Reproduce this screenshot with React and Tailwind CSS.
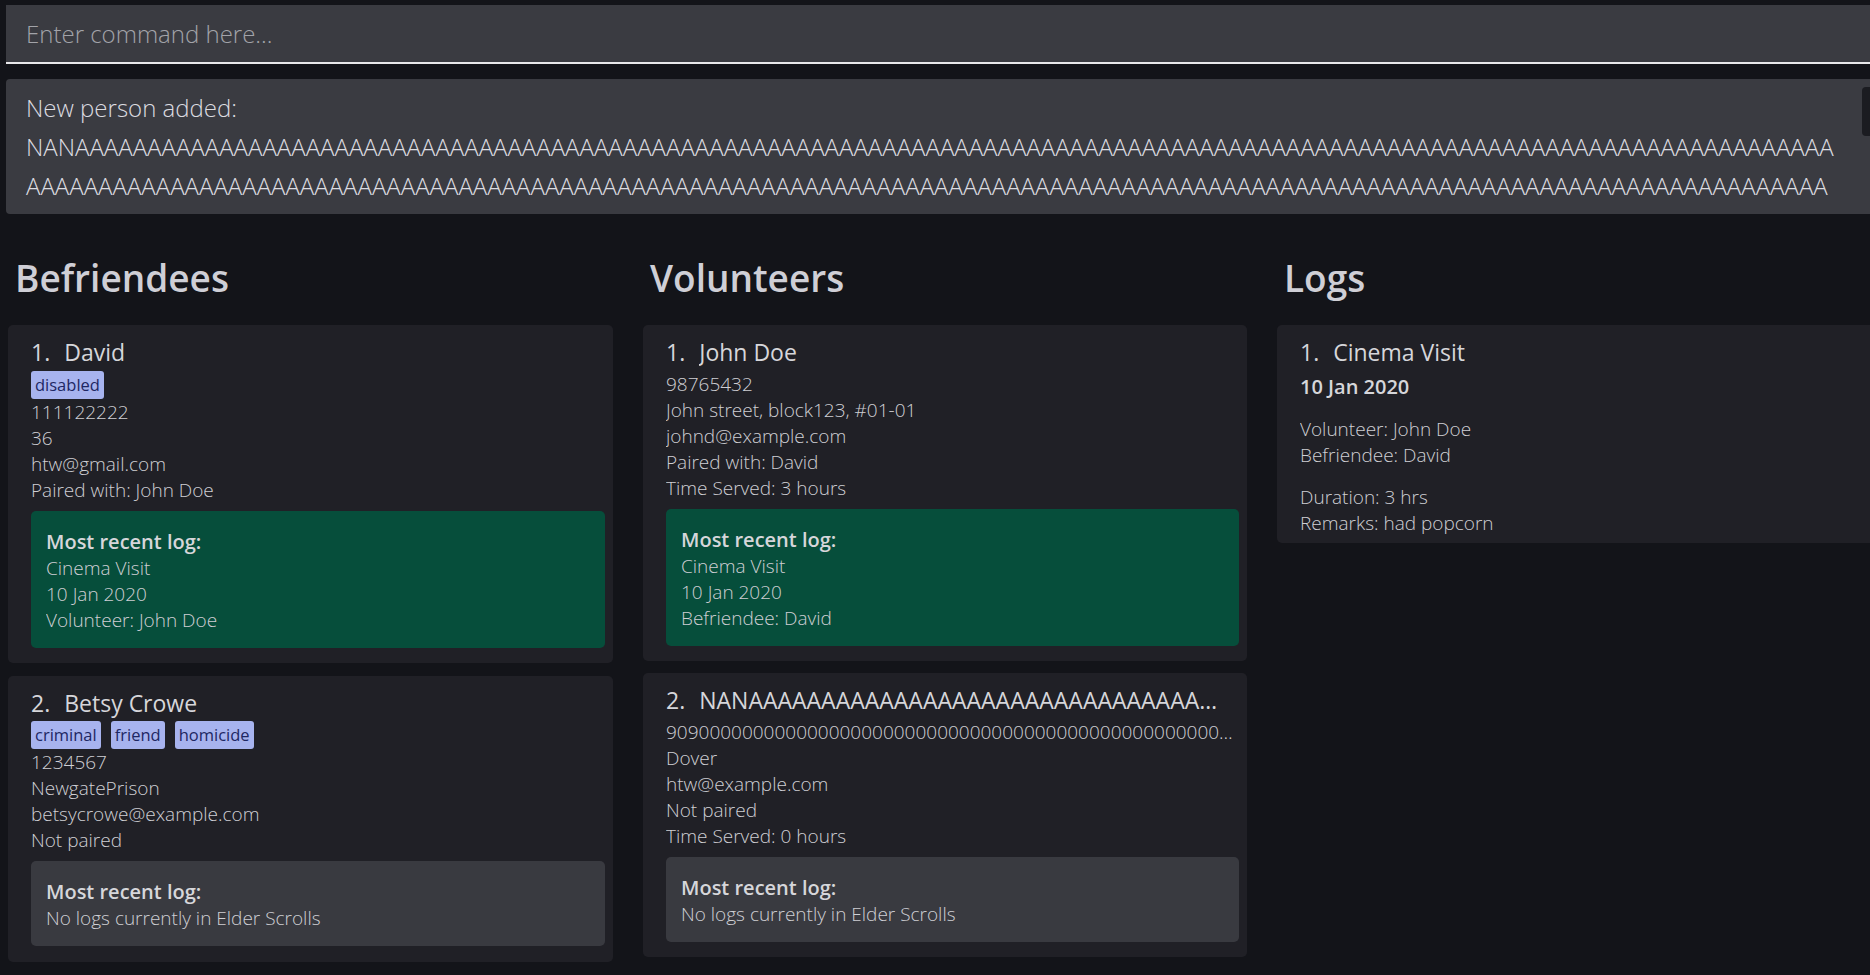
import React from "react";

const longName = "NAN" + "A".repeat(400);

function Tag({ children }) {
  return (
    <span className="inline-flex h-[28px] items-center rounded-[3px] bg-[#a7b3ee] px-[4px] text-[16.5px] font-normal leading-none text-[#1e2763]">
      {children}
    </span>
  );
}

function Title({ n, children, className = "" }) {
  return (
    <div className={"flex h-[30px] items-center whitespace-nowrap text-[23px] font-medium leading-[30px] text-[#d6d6da] " + className}>
      <span className="shrink-0">{n}.</span>
      <span className="ml-[14px] truncate">{children}</span>
    </div>
  );
}

function Line({ children, className = "" }) {
  return <div className={"h-[26px] truncate leading-[26px] " + className}>{children}</div>;
}

function LogBox({ green, lines }) {
  return (
    <div className={"mt-[8px] rounded-[5px] pb-[15px] pl-[15px] pr-[10px] pt-[18px] " + (green ? "bg-[#064e3b]" : "bg-[#393a40]")}>
      <Line className="text-[20px] font-semibold text-[#d6d6da]">Most recent log:</Line>
      {lines.map((l, i) => (
        <Line key={i}>{l}</Line>
      ))}
    </div>
  );
}

function Card({ children, pb = "pb-[15px]" }) {
  return (
    <div className={"rounded-[5px] bg-[#202026] pl-[23px] pr-[8px] pt-[12px] " + pb}>{children}</div>
  );
}

function Heading({ children }) {
  return (
    <div className="mb-[13px] flex h-[71px] items-center pl-[7px] pt-[3px] text-[37px] font-semibold leading-[44px] text-[#cfcfd6]">
      {children}
    </div>
  );
}

export default function App() {
  return (
    <div
      className="h-[975px] w-[1870px] overflow-hidden bg-[#131419] font-light text-[19px] text-[#cfcfd4]"
      style={{ fontFamily: "'Open Sans', 'Noto Sans', sans-serif" }}
    >
      <div className="pl-[6px] pt-[5px]">
        <div className="flex h-[59px] items-center border-b-2 border-[#e8e8ea] bg-[#3a3b41] pl-[20px] text-[24px] font-light text-[#a2a3a9]">
          Enter command here...
        </div>
      </div>
      <div className="pl-[6px] pt-[15px]">
        <div className="relative h-[135px] overflow-hidden rounded-l-[4px] bg-[#3a3b41] pl-[20px] pr-[30px] pt-[9px] text-[24px] font-light leading-[39px] text-[#dcdce0]">
          <div>New person added:</div>
          <div className="break-all">{longName}</div>
          <div className="absolute right-0 top-[8px] h-[49px] w-[8px] rounded-l-[4px] bg-[#1b1c21]" />
        </div>
      </div>

      <div className="flex gap-[30px] pl-[8px] pt-[27px]">
        <div className="w-[605px] shrink-0">
          <Heading>Befriendees</Heading>
          <div className="flex flex-col gap-[13px]">
            <Card>
              <Title n={1}>David</Title>
              <div className="mt-[4px] flex gap-[10px]">
                <Tag>disabled</Tag>
              </div>
              <Line>111122222</Line>
              <Line>36</Line>
              <Line>htw@gmail.com</Line>
              <Line>Paired with: John Doe</Line>
              <LogBox green lines={["Cinema Visit", "10 Jan 2020", "Volunteer: John Doe"]} />
            </Card>
            <Card pb="pb-[16px]">
              <Title n={2}>Betsy Crowe</Title>
              <div className="mt-[3px] flex gap-[10px]">
                <Tag>criminal</Tag>
                <Tag>friend</Tag>
                <Tag>homicide</Tag>
              </div>
              <Line>1234567</Line>
              <Line>NewgatePrison</Line>
              <Line>betsycrowe@example.com</Line>
              <Line>Not paired</Line>
              <LogBox lines={["No logs currently in Elder Scrolls"]} />
            </Card>
          </div>
        </div>

        <div className="w-[604px] shrink-0">
          <Heading>Volunteers</Heading>
          <div className="flex flex-col gap-[12px]">
            <Card>
              <Title n={1}>John Doe</Title>
              <div className="h-[4px]" />
              <Line>98765432</Line>
              <Line>John street, block123, #01-01</Line>
              <Line>johnd@example.com</Line>
              <Line>Paired with: David</Line>
              <Line>Time Served: 3 hours</Line>
              <LogBox green lines={["Cinema Visit", "10 Jan 2020", "Befriendee: David"]} />
            </Card>
            <Card pb="pb-[15px]">
              <Title n={2} className="pr-[14px]">{longName}</Title>
              <div className="h-[4px]" />
              <Line>{"9090" + "0".repeat(120)}</Line>
              <Line>Dover</Line>
              <Line>htw@example.com</Line>
              <Line>Not paired</Line>
              <Line>Time Served: 0 hours</Line>
              <LogBox lines={["No logs currently in Elder Scrolls"]} />
            </Card>
          </div>
        </div>

        <div className="w-[605px] shrink-0">
          <Heading>Logs</Heading>
          <div className="rounded-[5px] bg-[#202026] pb-[7px] pl-[23px] pr-[8px] pt-[12px]">
            <Title n={1}>Cinema Visit</Title>
            <div className="mt-[7px] h-[26px] text-[20px] font-semibold leading-[26px] text-[#d6d6da]">10 Jan 2020</div>
            <div className="mt-[16px]">
              <Line>Volunteer: John Doe</Line>
              <Line>Befriendee: David</Line>
            </div>
            <div className="mt-[16px]">
              <Line>Duration: 3 hrs</Line>
              <Line>Remarks: had popcorn</Line>
            </div>
          </div>
        </div>
      </div>
    </div>
  );
}
